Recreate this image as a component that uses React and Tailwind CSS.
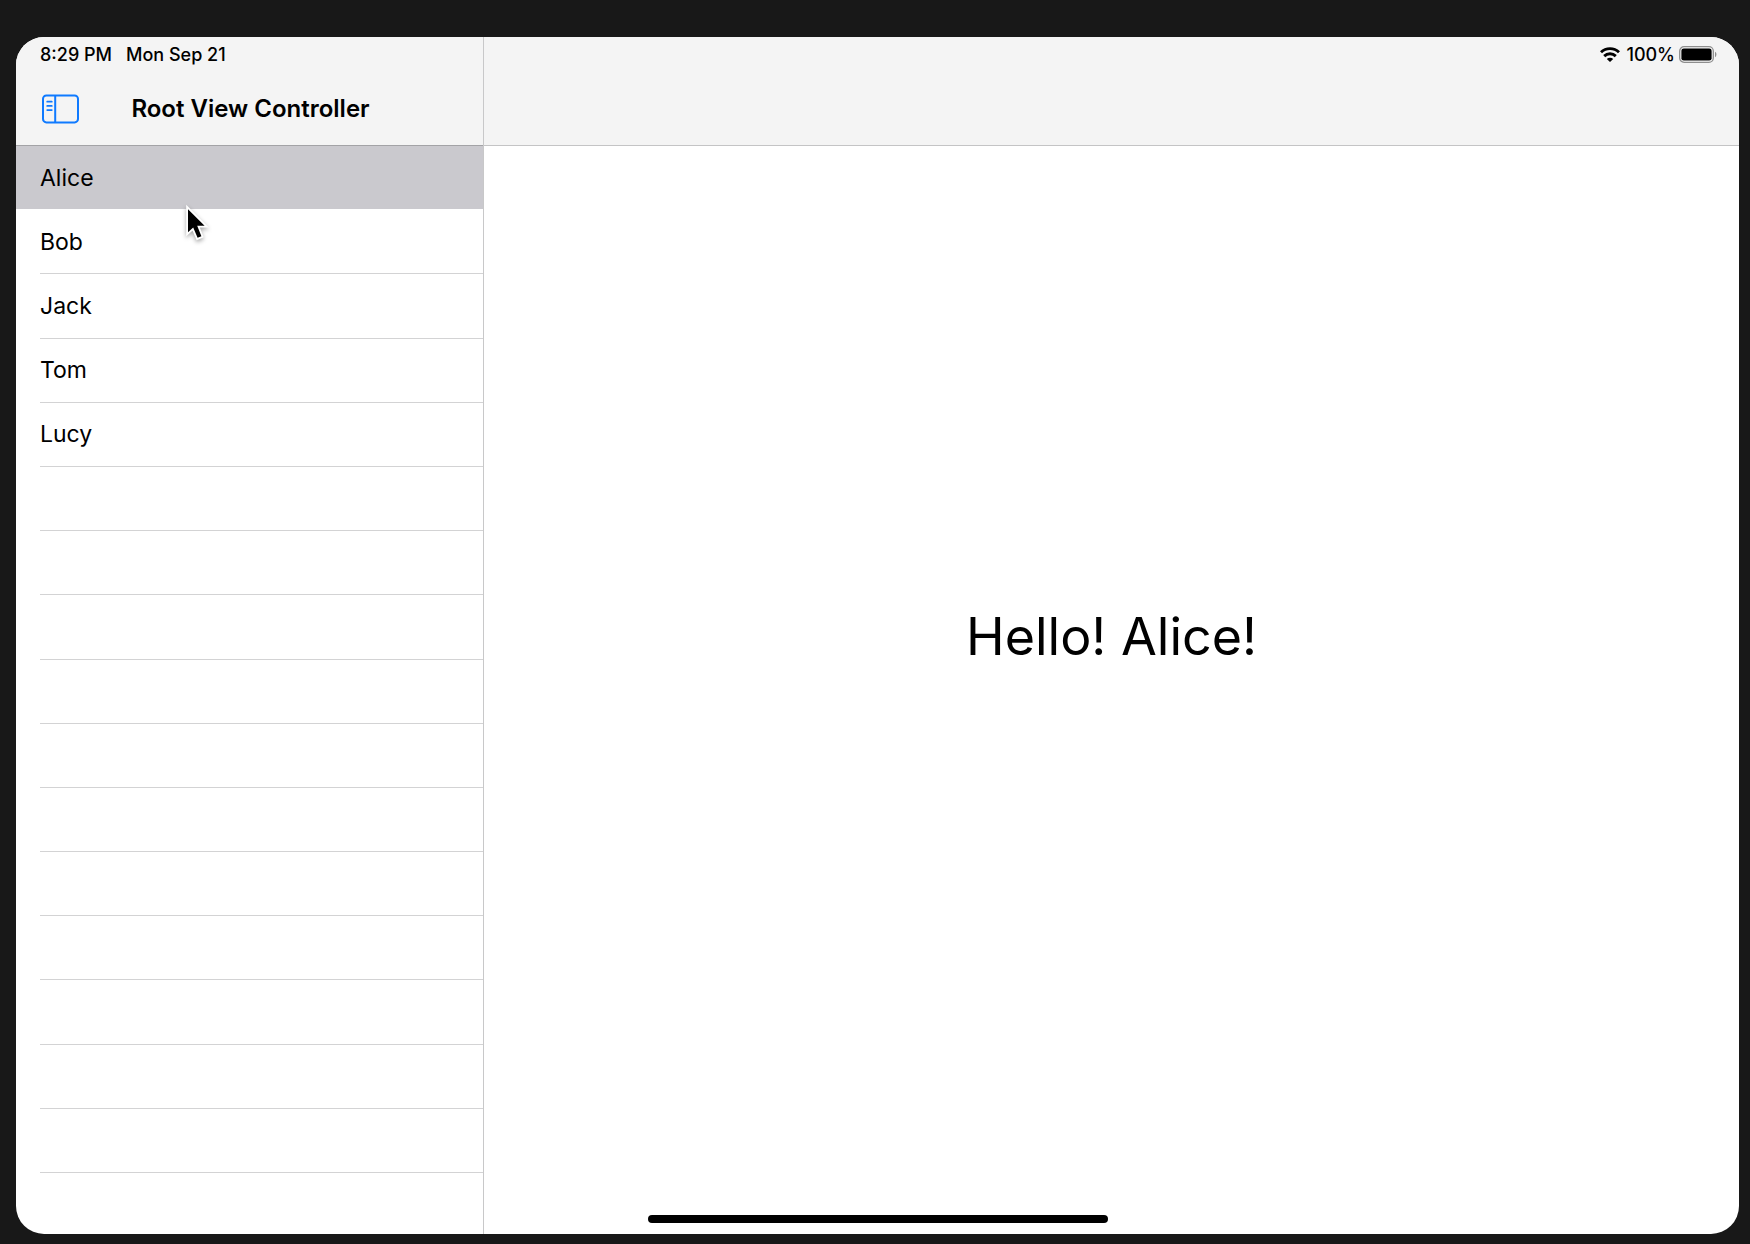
import { useState } from "react";

const names = ["Alice", "Bob", "Jack", "Tom", "Lucy"];
const blanks = Array.from({ length: 11 }, (_, i) => i);

function SidebarIcon() {
  return (
    <svg viewBox="0 0 38 30" className="h-[30px] w-[38px]" fill="none" stroke="#0f7aff" aria-hidden="true">
      <rect x="1" y="1.4" width="35" height="27" rx="3.4" strokeWidth="2" />
      <path d="M13.2 1.4v27" strokeWidth="2" />
      <path d="M5.2 7.7h4.6M5.2 11.9h4.6M5.2 16.1h4.6" strokeWidth="1.7" strokeLinecap="round" />
    </svg>
  );
}

function WifiIcon() {
  return (
    <svg viewBox="0 0 20 15" className="h-[15px] w-5" fill="none" stroke="#000" strokeWidth="2.9" aria-hidden="true">
      <path d="M1 5.3a12.9 12.9 0 0 1 18 0" />
      <path d="M4.2 9.1a8.3 8.3 0 0 1 11.6 0" />
      <path d="M10 15 6.8 12a4.5 4.5 0 0 1 6.4 0z" fill="#000" stroke="none" />
    </svg>
  );
}

function BatteryIcon() {
  return (
    <svg viewBox="0 0 38 17" className="h-[17px] w-[38px]" aria-hidden="true">
      <rect x="0.7" y="0.7" width="33.6" height="15.6" rx="4.4" fill="none" stroke="#8e8e8e" strokeWidth="1.3" />
      <rect x="2.4" y="2.4" width="30.2" height="12.2" rx="2.4" fill="#000" />
      <path d="M36 5.8c1.9.8 1.9 4.6 0 5.4z" fill="#8e8e8e" />
    </svg>
  );
}

function Pointer() {
  return (
    <svg
      viewBox="0 0 24 38"
      className="pointer-events-none absolute top-[60px] left-[170px] z-10 h-[38px] w-6 overflow-visible drop-shadow-[0_2px_2px_rgba(0,0,0,0.35)]"
      aria-hidden="true"
    >
      <path
        d="M2 3.2V26.2L7.2 21.6L11.6 31.8L15.4 30.2L11.2 19.8H18.6z"
        fill="#000"
        stroke="#fff"
        strokeWidth="3.6"
        paintOrder="stroke"
      />
    </svg>
  );
}

export default function App() {
  const [selected, setSelected] = useState("Alice");
  const [open, setOpen] = useState(true);

  return (
    <div className="flex min-h-screen bg-[#181818] pt-[37px] pr-[11px] pb-[10px] pl-4 font-[Inter,sans-serif] text-black">
      <div className="relative flex flex-1 overflow-hidden rounded-[28px] bg-white">
        <aside className="flex w-[468px] shrink-0 flex-col border-r border-[#c8c8c9]">
          <header className="flex h-[109px] flex-col border-b border-[#a3a3a6] bg-[#f4f4f4]">
            <div className="flex h-[35px] items-center gap-3.5 pl-6 text-[18px] font-medium">
              <span>8:29 PM</span>
              <span>Mon Sep 21</span>
            </div>
            <div className="grid flex-1 grid-cols-[64px_1fr_62px] items-center">
              <button
                type="button"
                aria-label="Toggle sidebar"
                aria-pressed={open}
                onClick={() => setOpen(!open)}
                className="flex justify-end"
              >
                <SidebarIcon />
              </button>
              <h1 className="text-center text-[24px] leading-8 font-semibold">Root View Controller</h1>
            </div>
          </header>
          <div className="relative flex flex-1 flex-col pb-[61px]">
            <Pointer />
            {names.map((name) => (
              <button
                key={name}
                type="button"
                aria-pressed={selected === name}
                onClick={() => setSelected(name)}
                className={
                  selected === name
                    ? "flex flex-1 bg-[#cac9ce] pl-6 text-left text-[23px] shadow-[inset_0_-1px_0_white]"
                    : "flex flex-1 pl-6 text-left text-[23px]"
                }
              >
                <span
                  className={
                    selected === name
                      ? "flex flex-1 items-center self-stretch"
                      : "flex flex-1 items-center self-stretch border-b border-[#d3d3d4]"
                  }
                >
                  {name}
                </span>
              </button>
            ))}
            {blanks.map((i) => (
              <div key={i} className="flex flex-1 pl-6">
                <div className="flex-1 border-b border-[#d3d3d4]" />
              </div>
            ))}
          </div>
        </aside>
        <main className="flex flex-1 flex-col">
          <header className="h-[109px] border-b border-[#c4c4c5] bg-[#f4f4f4]">
            <div className="flex h-[35px] items-center justify-end pr-[22px] text-[18px] font-medium">
              <WifiIcon />
              <span className="ml-1.5">100%</span>
              <span className="ml-1">
                <BatteryIcon />
              </span>
            </div>
          </header>
          <div className="flex flex-1 items-center justify-center pb-[106px]">
            <p className="text-[52px] leading-none">Hello! {selected}!</p>
          </div>
        </main>
        <div className="absolute inset-x-0 bottom-[11px] mx-auto h-2 w-[460px] rounded-full bg-black" />
      </div>
    </div>
  );
}
